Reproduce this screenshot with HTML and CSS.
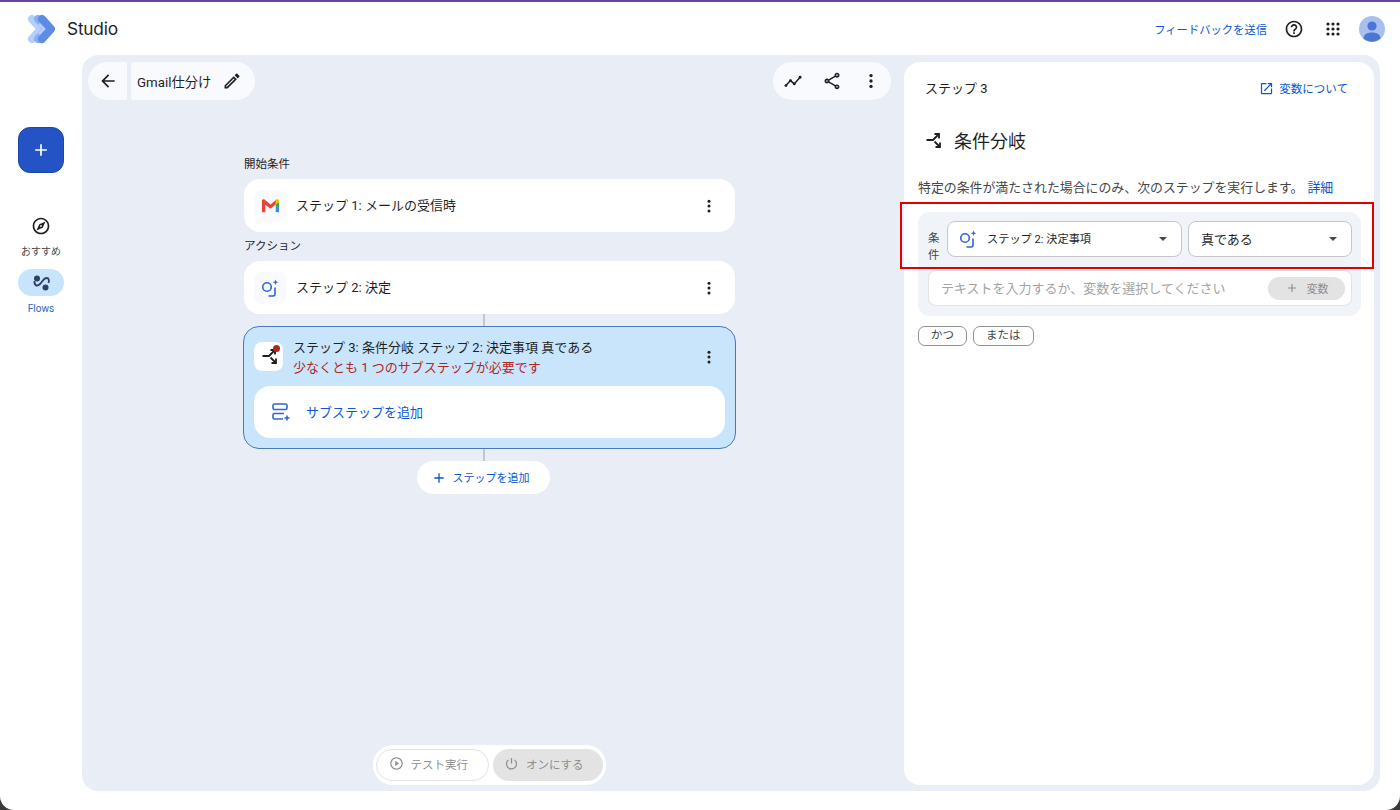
FILE: index.html
```html
<!DOCTYPE html>
<html lang="ja">
<head>
    <meta charset="utf-8">
    <title>Studio</title>
    <link rel="stylesheet" href="styles.css">
</head>
<body>
<div class="app">
    <div class="top-strip"></div>

    <header class="header">
        <svg class="logo" viewBox="0 0 30 32" width="30" height="32">
            <path d="M6 6l9 10-9 10" fill="none" stroke="#b4d0f8" stroke-width="8" stroke-linejoin="round" stroke-linecap="round"/>
            <path d="M12 6l9 10-9 10" fill="none" stroke="#8aaef2" stroke-width="8" stroke-linejoin="round" stroke-linecap="round"/>
            <path d="M16 6l9 10-9 10" fill="none" stroke="#5f8ae6" stroke-width="8" stroke-linejoin="round" stroke-linecap="round"/>
            <path d="M13 11l5 5-5 5" fill="none" stroke="#b4d0f8" stroke-width="2.5"/>
        </svg>
        <span class="brand">Studio</span>
        <a class="feedback">フィードバックを送信</a>
        <svg class="icon help" viewBox="0 0 24 24"><path d="M11 18h2v-2h-2v2zm1-16C6.48 2 2 6.48 2 12s4.48 10 10 10 10-4.48 10-10S17.52 2 12 2zm0 18c-4.41 0-8-3.59-8-8s3.59-8 8-8 8 3.59 8 8-3.59 8-8 8zm0-14c-2.21 0-4 1.79-4 4h2c0-1.1.9-2 2-2s2 .9 2 2c0 2-3 1.75-3 5h2c0-2.25 3-2.5 3-5 0-2.21-1.79-4-4-4z"/></svg>
        <svg class="apps" viewBox="0 0 14 14" width="14" height="14">
            <circle cx="2" cy="2" r="1.6"/><circle cx="7" cy="2" r="1.6"/><circle cx="12" cy="2" r="1.6"/>
            <circle cx="2" cy="7" r="1.6"/><circle cx="7" cy="7" r="1.6"/><circle cx="12" cy="7" r="1.6"/>
            <circle cx="2" cy="12" r="1.6"/><circle cx="7" cy="12" r="1.6"/><circle cx="12" cy="12" r="1.6"/>
        </svg>
        <svg class="avatar" viewBox="0 0 26 26" width="26" height="26">
            <circle cx="13" cy="13" r="13" fill="#a8c0f0"/>
            <circle cx="13" cy="10" r="4.6" fill="#4a76d4"/>
            <path d="M4.5 22.5c0-4 3.5-6 8.5-6s8.5 2 8.5 6a13 13 0 0 1-17 0z" fill="#4a76d4"/>
        </svg>
    </header>

    <div class="main">
        <nav class="sidebar">
            <button class="fab">
                <svg viewBox="0 0 24 24" width="20" height="20"><path d="M11 5h2v6h6v2h-6v6h-2v-6H5v-2h6z" fill="#fff"/></svg>
            </button>
            <div class="nav-item">
                <svg class="icon" viewBox="0 0 24 24"><path d="M12 2C6.48 2 2 6.48 2 12s4.48 10 10 10 10-4.48 10-10S17.52 2 12 2zm0 18c-4.41 0-8-3.59-8-8s3.59-8 8-8 8 3.59 8 8-3.59 8-8 8zm-5.5-2.5l7.51-3.49L17.5 6.5 9.99 9.99 6.5 17.5zm5.5-6.6c.61 0 1.1.49 1.1 1.1s-.49 1.1-1.1 1.1-1.1-.49-1.1-1.1.49-1.1 1.1-1.1z"/></svg>
                <span class="nav-label">おすすめ</span>
            </div>
            <div class="nav-item active">
                <span class="nav-pill">
                    <svg viewBox="0 0 20 20" width="20" height="20" fill="#2f3f66">
                        <circle cx="6" cy="5.5" r="3"/><circle cx="14.5" cy="14.5" r="3"/>
                        <path d="M3.5 8c-.5 4 2.5 6 5.5 3s3.500-6 6.500-6 2.500 3 2 5" fill="none" stroke="#2f3f66" stroke-width="1.8"/>
                    </svg>
                </span>
                <span class="nav-label">Flows</span>
            </div>
        </nav>

        <div class="canvas">
            <section class="editor">
                <div class="toolbar">
                    <div class="title-group">
                        <button class="back">
                            <svg class="icon" viewBox="0 0 24 24"><path d="M20 11H7.83l5.59-5.59L12 4l-8 8 8 8 1.41-1.41L7.83 13H20v-2z"/></svg>
                        </button>
                        <div class="title">
                            <span>Gmail仕分け</span>
                            <svg class="icon" viewBox="0 0 24 24"><path d="M14.06 9.02l.92.92L5.92 19H5v-.92l9.06-9.06M17.66 3c-.25 0-.51.1-.7.29l-1.83 1.83 3.75 3.75 1.83-1.83c.39-.39.39-1.02 0-1.41l-2.34-2.34c-.2-.2-.45-.29-.71-.29zm-3.6 3.19L3 17.25V21h3.75L17.81 9.94l-3.75-3.75z"/></svg>
                        </div>
                    </div>
                    <div class="actions">
                        <svg class="icon" viewBox="0 0 24 24"><path d="M3.5 17.5l5.5-6 4.5 4 7-8" fill="none" stroke="#1f1f1f" stroke-width="1.8"/><circle cx="3.5" cy="17.5" r="1.7"/><circle cx="9" cy="11.5" r="1.7"/><circle cx="13.5" cy="15.5" r="1.7"/><circle cx="20.5" cy="7.5" r="1.7"/></svg>
                        <svg class="icon" viewBox="0 0 24 24"><path d="M18 16.08c-.76 0-1.44.3-1.96.77L8.91 12.7c.05-.23.09-.46.09-.7s-.04-.47-.09-.7l7.05-4.11c.54.5 1.25.81 2.04.81 1.66 0 3-1.34 3-3s-1.34-3-3-3-3 1.34-3 3c0 .24.04.47.09.7L8.04 9.81C7.5 9.31 6.79 9 6 9c-1.66 0-3 1.34-3 3s1.34 3 3 3c.79 0 1.5-.31 2.04-.81l7.12 4.16c-.05.21-.08.43-.08.65 0 1.61 1.31 2.92 2.92 2.92s2.92-1.31 2.92-2.92-1.31-2.92-2.92-2.92zM18 4c.55 0 1 .45 1 1s-.45 1-1 1-1-.45-1-1 .45-1 1-1zM6 13c-.55 0-1-.45-1-1s.45-1 1-1 1 .45 1 1-.45 1-1 1zm12 7.02c-.55 0-1-.45-1-1s.45-1 1-1 1 .45 1 1-.45 1-1 1z"/></svg>
                        <svg class="icon" viewBox="0 0 24 24"><circle cx="12" cy="5.5" r="2"/><circle cx="12" cy="12" r="2"/><circle cx="12" cy="18.5" r="2"/></svg>
                    </div>
                </div>

                <div class="flow">
                    <div class="flow-label">開始条件</div>
                    <div class="step">
                        <span class="tile">
                            <svg viewBox="0 0 20 16" width="19" height="16">
                                <path d="M1 2.5v12h3.5V6z" fill="#ea4335"/>
                                <path d="M1 2.5c0-1.500 2-2 3-1l6 5 6-5-.5 5L10 11 1 4z" fill="#ea4335"/>
                                <path d="M15.5 1.500l1-.5c1.500-.5 2.500.5 2.500 1.500v2l-3.500 2.500z" fill="#fbbc04"/>
                                <path d="M15.5 6.500l3.500-2.500v5h-3.500z" fill="#34a853"/>
                                <path d="M15.5 9H19v5.500h-3.500z" fill="#4285f4"/>
                            </svg>
                        </span>
                        <span class="step-text">ステップ 1: メールの受信時</span>
                        <svg class="icon more" viewBox="0 0 24 24"><circle cx="12" cy="5.5" r="2"/><circle cx="12" cy="12" r="2"/><circle cx="12" cy="18.5" r="2"/></svg>
                    </div>
                    <div class="flow-label second">アクション</div>
                    <div class="step">
                        <span class="tile">
                            <svg class="blue-ic" viewBox="0 0 20 20" width="20" height="20">
                                <circle cx="7" cy="9" r="4.3"/>
                                <path d="M15 9.500v6.500a2 2 0 0 1-2 2H8.500"/>
                                <path class="spark" d="M15.500 1.500l.8 2 2 .8-2 .8-.8 2-.8-2-2-.8 2-.8z"/>
                            </svg>
                        </span>
                        <span class="step-text">ステップ 2: 決定</span>
                        <svg class="icon more" viewBox="0 0 24 24"><circle cx="12" cy="5.5" r="2"/><circle cx="12" cy="12" r="2"/><circle cx="12" cy="18.5" r="2"/></svg>
                    </div>
                    <div class="connector"></div>
                    <div class="step-open">
                        <div class="step-open-head">
                            <span class="tile white">
                                <svg class="branch" viewBox="-2 0 20 20" width="20" height="20">
                                    <path d="M1.5 10H8l5-5"/><path d="M9.5 4h4.5v4.5"/>
                                    <path d="M9.5 11.500l5 5"/><path d="M15 12.500v4.500h-4.500"/>
                                </svg>
                                <i class="error-dot"></i>
                            </span>
                            <div class="step-open-text">
                                <div class="step-text">ステップ 3: 条件分岐 ステップ 2: 決定事項 真である</div>
                                <div class="step-error">少なくとも 1 つのサブステップが必要です</div>
                            </div>
                            <svg class="icon more" viewBox="0 0 24 24"><circle cx="12" cy="5.5" r="2"/><circle cx="12" cy="12" r="2"/><circle cx="12" cy="18.5" r="2"/></svg>
                        </div>
                        <div class="substep">
                            <svg class="blue-ic" viewBox="0 0 18 18" width="18" height="18">
                                <rect x="1" y="1" width="14" height="5.5" rx="1.5"/>
                                <path d="M12 10.500H2.500A1.500 1.500 0 0 0 1 12v2.500A1.500 1.500 0 0 0 2.500 16H11"/>
                                <path d="M15 12.500v5M12.500 15h5"/>
                            </svg>
                            <span class="substep-text">サブステップを追加</span>
                        </div>
                    </div>
                    <div class="connector"></div>
                    <button class="add-step">
                        <svg viewBox="0 0 24 24" width="16" height="16"><path d="M11 5h2v6h6v2h-6v6h-2v-6H5v-2h6z" fill="#0b57d0"/></svg>
                        <span class="add-step-text">ステップを追加</span>
                    </button>
                </div>

                <div class="run-bar">
                    <button class="run-btn test">
                        <svg class="icon" viewBox="0 0 24 24"><path d="M10 16.500l6-4.500-6-4.500v9zM12 2C6.480 2 2 6.480 2 12s4.480 10 10 10 10-4.480 10-10S17.520 2 12 2zm0 18c-4.410 0-8-3.590-8-8s3.590-8 8-8 8 3.590 8 8-3.590 8-8 8z"/></svg>
                        <span>テスト実行</span>
                    </button>
                    <button class="run-btn on">
                        <svg class="icon" viewBox="0 0 24 24"><path d="M12 3v9M7 6.500a8 8 0 1 0 10 0" fill="none" stroke="#8f8f8f" stroke-width="2"/></svg>
                        <span>オンにする</span>
                    </button>
                </div>
            </section>

            <aside class="panel">
                <div class="panel-top">
                    <span>ステップ 3</span>
                    <a class="about">
                        <svg viewBox="0 0 24 24" width="15" height="15"><path d="M19 19H5V5h7V3H5c-1.110 0-2 .9-2 2v14c0 1.100.89 2 2 2h14c1.100 0 2-.9 2-2v-7h-2v7zM14 3v2h3.590l-9.830 9.830 1.410 1.410L19 6.410V10h2V3h-7z" fill="#0b57d0"/></svg>
                        変数について
                    </a>
                </div>
                <h2 class="panel-title">
                    <svg class="branch" viewBox="0 0 20 20" width="20" height="20">
                        <path d="M1.5 10H8l5-5"/><path d="M9.5 4h4.5v4.5"/>
                        <path d="M9.5 11.500l5 5"/><path d="M15 12.500v4.500h-4.500"/>
                    </svg>
                    条件分岐
                </h2>
                <p class="desc">特定の条件が満たされた場合にのみ、次のステップを実行します。<a>詳細</a></p>

                <div class="cond">
                    <div class="cond-row">
                        <span class="cond-label">条件</span>
                        <div class="select first">
                            <svg class="blue-ic" viewBox="0 0 20 20" width="20" height="20">
                                <circle cx="7" cy="9" r="4.3"/>
                                <path d="M15 9.500v6.500a2 2 0 0 1-2 2H8.500"/>
                                <path class="spark" d="M15.500 1.500l.8 2 2 .8-2 .8-.8 2-.8-2-2-.8 2-.8z"/>
                            </svg>
                            <span class="select-text small">ステップ 2: 決定事項</span>
                            <i class="caret"></i>
                        </div>
                        <div class="select second">
                            <span class="select-text">真である</span>
                            <i class="caret"></i>
                        </div>
                    </div>
                    <div class="cond-input">
                        <span class="placeholder">テキストを入力するか、変数を選択してください</span>
                        <span class="var-btn">
                            <svg viewBox="0 0 24 24" width="14" height="14"><path d="M11 5h2v6h6v2h-6v6h-2v-6H5v-2h6z" fill="#8f8f8f"/></svg>
                            変数
                        </span>
                    </div>
                </div>

                <div class="chips">
                    <span class="chip">かつ</span>
                    <span class="chip">または</span>
                </div>

                <div class="highlight"></div>
            </aside>
        </div>
    </div>
</div>
</body>
</html>
```

FILE: styles.css
```css
* {
    box-sizing: border-box;
}
html, body {
    height: 100%;
}
body {
    margin: 0;
    background-color: #3a3a3a;
    color: #1f1f1f;
    font-family: Roboto, "Noto Sans CJK JP", sans-serif;
    font-size: 13px;
    overflow: hidden;
}
button {
    border: none;
    font-family: inherit;
    padding: 0;
}
.icon {
    width: 20px;
    height: 20px;
    fill: #1f1f1f;
    flex: none;
}
.blue-ic {
    fill: none;
    stroke: #2f66d6;
    stroke-width: 1.6;
    flex: none;
}
.blue-ic .spark {
    fill: #2f66d6;
    stroke: none;
}
.branch {
    fill: none;
    stroke: #1f1f1f;
    stroke-width: 1.8;
    flex: none;
}

.app {
    height: 810px;
    background-color: #fff;
    border-radius: 0 0 14px 14px;
    display: flex;
    flex-direction: column;
    overflow: hidden;
}
.top-strip {
    height: 2px;
    background-color: #6b419f;
}

/* ヘッダー */
.header {
    height: 53px;
    display: flex;
    align-items: center;
    padding: 0 15px 0 26px;
}
.logo {
    margin-right: 11px;
}
.brand {
    font-family: Inter, Roboto, sans-serif;
    font-size: 17.3px;
    letter-spacing: -0.2px;
    color: #1f1f1f;
}
.feedback {
    margin-left: auto;
    color: #0b57d0;
    font-size: 11.3px;
}
.help {
    margin-left: 17px;
}
.apps {
    margin-left: 22px;
    fill: #1f1f1f;
}
.avatar {
    margin-left: 19px;
}

.main {
    flex: 1;
    display: flex;
    min-height: 0;
    padding: 0 20px 19px 0;
}

/* サイドバー */
.sidebar {
    width: 82px;
    flex: none;
    display: flex;
    flex-direction: column;
    align-items: center;
    padding-top: 72px;
}
.fab {
    width: 46px;
    height: 46px;
    border-radius: 12px;
    background-color: #2353c5;
    border: 1px solid #1c46ab;
    display: flex;
    align-items: center;
    justify-content: center;
    margin-bottom: 43px;
}
.nav-item {
    display: flex;
    flex-direction: column;
    align-items: center;
    margin-bottom: 10px;
}
.nav-item .icon {
    margin-bottom: 9px;
}
.nav-label {
    font-size: 10px;
    line-height: 14px;
    color: #444746;
}
.nav-pill {
    width: 46px;
    height: 27px;
    border-radius: 14px;
    background-color: #c7e4fd;
    display: flex;
    align-items: center;
    justify-content: center;
    margin-bottom: 6px;
}
.active .nav-label {
    color: #2b63c9;
}

/* キャンバス */
.canvas {
    flex: 1;
    display: flex;
    gap: 6px;
    padding: 7px 6px 6px;
    background-color: #e9eef6;
    border-radius: 16px;
    min-width: 0;
}
.editor {
    flex: 1;
    display: flex;
    flex-direction: column;
    min-width: 0;
}
.toolbar {
    display: flex;
    justify-content: space-between;
    padding-right: 7px;
}
.title-group {
    display: flex;
    gap: 4px;
    height: 38px;
}
.back {
    width: 39px;
    background-color: #f8fafd;
    border-radius: 19px 2px 2px 19px;
    display: flex;
    align-items: center;
    justify-content: center;
}
.title {
    width: 124px;
    background-color: #f8fafd;
    border-radius: 2px 19px 19px 2px;
    display: flex;
    align-items: center;
    gap: 11px;
    padding-left: 6px;
    font-size: 13.3px;
}
.actions {
    width: 118px;
    height: 38px;
    background-color: #f8fafd;
    border-radius: 19px;
    display: flex;
    align-items: center;
    justify-content: space-between;
    padding: 0 10px;
}

/* フロー */
.flow {
    width: 491px;
    margin-left: 156px;
    margin-top: 55px;
    display: flex;
    flex-direction: column;
}
.flow-label {
    font-size: 11.5px;
    line-height: 18px;
    height: 24px;
}
.flow-label.second {
    margin-top: 5px;
}
.step {
    height: 53px;
    background-color: #fff;
    border-radius: 16px;
    display: flex;
    align-items: center;
    padding: 0 17px 0 10px;
}
.tile {
    width: 32px;
    height: 32px;
    border-radius: 8px;
    background-color: #f8fafd;
    display: flex;
    align-items: center;
    justify-content: center;
    flex: none;
    position: relative;
}
.tile.white {
    width: 29px;
    height: 29px;
    background-color: #fff;
    margin-bottom: 2px;
}
.error-dot {
    position: absolute;
    top: 3px;
    right: 3px;
    width: 7px;
    height: 7px;
    border-radius: 50%;
    background-color: #b3261e;
}
.step-text {
    font-size: 13px;
    line-height: 20px;
    margin-left: 10px;
}
.more {
    margin-left: auto;
    width: 18px;
    height: 18px;
}
.connector {
    width: 2px;
    height: 12px;
    background-color: #c4c7c5;
    align-self: center;
    margin-right: 11px;
}
.step-open {
    margin: 0 -1px;
    height: 123px;
    background-color: #c9e5fc;
    border: 1px solid #4a79b3;
    border-radius: 16px;
    padding: 9px 10px;
}
.step-open-head {
    display: flex;
    align-items: center;
    height: 40px;
    padding: 2px 7px 0 0;
    margin-bottom: 10px;
}
.step-open-text {
    margin-left: 10px;
}
.step-open-text .step-text {
    margin-left: 0;
    line-height: 20px;
}
.step-error {
    color: #b3261e;
    font-size: 13px;
    line-height: 19px;
}
.substep {
    height: 52px;
    background-color: #fff;
    border-radius: 16px;
    display: flex;
    align-items: center;
    gap: 16px;
    padding-left: 18px;
    color: #0b57d0;
    font-size: 13px;
}
.substep-text {
    padding-bottom: 2px;
}
.add-step {
    align-self: center;
    margin-right: 13px;
    width: 133px;
    height: 33px;
    border-radius: 17px;
    background-color: #fff;
    color: #0b57d0;
    font-size: 11px;
    display: flex;
    align-items: center;
    justify-content: center;
    gap: 6px;
    padding-right: 6px;
}
.add-step-text {
    padding-bottom: 2px;
}

/* 実行ボタン */
.run-bar {
    margin: auto 0 0 285px;
    width: 233px;
    height: 40px;
    background-color: #fff;
    border-radius: 20px;
    display: flex;
    gap: 4px;
    align-items: center;
    padding: 0 3px;
}
.run-btn {
    flex: 1;
    height: 32px;
    border-radius: 16px;
    display: flex;
    align-items: center;
    justify-content: center;
    gap: 7px;
    color: #8f8f8f;
    font-size: 11.5px;
    background-color: transparent;
    padding: 0 8px 3px 0;
}
.run-btn .icon {
    width: 15px;
    height: 15px;
    fill: #8f8f8f;
}
.run-btn.test {
    border: 1px solid #e3e3e3;
}
.run-btn.on {
    background-color: #e3e3e3;
}

/* 右パネル */
.panel {
    width: 470px;
    flex: none;
    background-color: #fff;
    border-radius: 16px;
    padding: 0 13px 0 14px;
    position: relative;
}
.panel-top {
    display: flex;
    justify-content: space-between;
    align-items: center;
    height: 50px;
    padding: 0 13px 0 7px;
}
.about {
    display: flex;
    align-items: center;
    gap: 5px;
    color: #0b57d0;
    font-size: 11.5px;
    padding-top: 2px;
}
.panel-title {
    margin: 15px 0 0 7px;
    height: 26px;
    display: flex;
    align-items: center;
    gap: 9px;
    font-size: 18px;
    font-weight: 400;
}
.desc {
    margin: 26px 0 0;
    line-height: 18px;
    font-size: 12.9px;
    color: #444746;
    white-space: nowrap;
}
.desc a {
    color: #0b57d0;
    margin-left: 4px;
}
.cond {
    margin-top: 15px;
    width: 443px;
    height: 104px;
    background-color: #f0f4f9;
    border-radius: 12px;
    padding: 9px 9px 0 10px;
}
.cond-row {
    display: flex;
    align-items: center;
    gap: 6px;
    height: 36px;
}
.cond-label {
    width: 13px;
    font-size: 11.5px;
    line-height: 17px;
    margin-top: 16px;
    color: #444746;
    flex: none;
}
.select {
    height: 36px;
    background-color: #fff;
    border: 1px solid #c4c7c5;
    border-radius: 8px;
    display: flex;
    align-items: center;
}
.select.first {
    width: 235px;
    padding: 0 14px 0 10px;
}
.select.second {
    width: 164px;
    padding: 0 14px 0 12px;
}
.select-text {
    font-size: 13px;
    padding-bottom: 2px;
}
.select-text.small {
    margin-left: 9px;
    font-size: 11.2px;
}
.caret {
    margin-left: auto;
    border-left: 4.5px solid transparent;
    border-right: 4.5px solid transparent;
    border-top: 4.5px solid #444746;
}
.cond-input {
    margin-top: 13px;
    height: 36px;
    background-color: #fff;
    border: 1px solid #e3e3e3;
    border-radius: 8px;
    display: flex;
    align-items: center;
    justify-content: space-between;
    padding: 0 6px 0 12px;
}
.placeholder {
    color: #a3a3a3;
    font-size: 13px;
    padding-bottom: 2px;
}
.var-btn {
    width: 77px;
    height: 23px;
    background-color: #e3e3e3;
    border-radius: 12px;
    color: #8f8f8f;
    font-size: 11px;
    display: flex;
    align-items: center;
    justify-content: center;
    gap: 8px;
}
.chips {
    display: flex;
    gap: 6px;
    margin-top: 10px;
}
.chip {
    height: 20px;
    padding: 0 12px;
    border: 1px solid #8e918f;
    border-radius: 7px;
    font-size: 11.5px;
    line-height: 17px;
    color: #444746;
}
.highlight {
    position: absolute;
    left: -4px;
    top: 140px;
    width: 474px;
    height: 67px;
    border: 2px solid #e00000;
    pointer-events: none;
}
```
